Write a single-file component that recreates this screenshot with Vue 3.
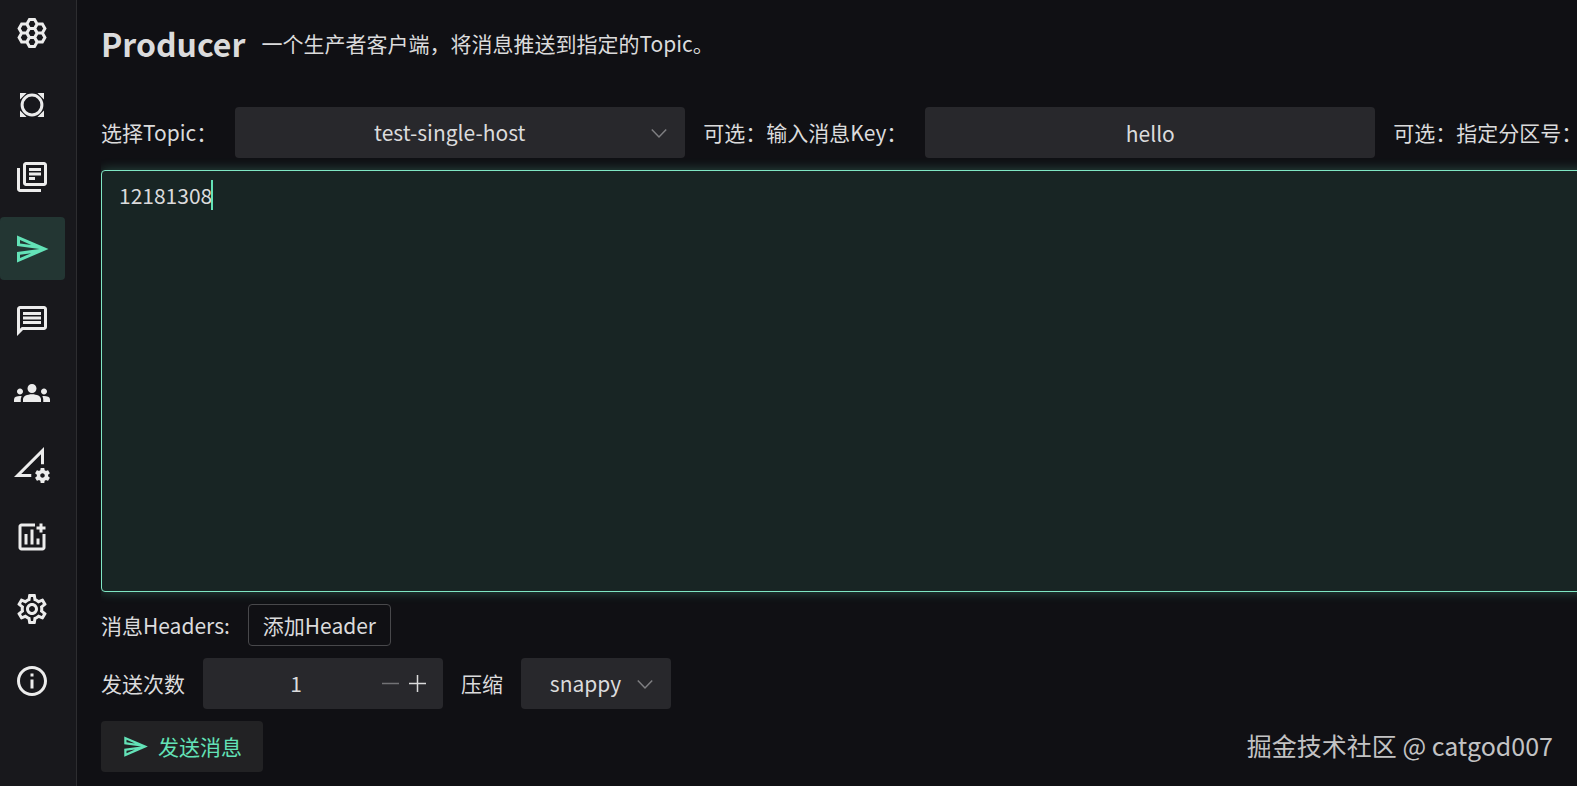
<template>
  <div class="layout">
    <nav class="sidebar" aria-label="Kafka">
      <a
        v-for="item in menu"
        :key="item.name"
        href="#"
        class="menu-item"
        :class="{ active: item.name === current }"
        :aria-label="item.name"
        @click.prevent="current = item.name"
      >
        <svg viewBox="0 0 24 24" aria-hidden="true">
          <path v-if="item.line" :d="item.line" class="line" />
          <path v-if="item.fill" :d="item.fill" />
        </svg>
      </a>
    </nav>

    <main class="content">
      <header class="header">
        <h2>Producer</h2>
        <p>一个生产者客户端，将消息推送到指定的Topic。</p>
      </header>

      <form class="form" @submit.prevent>
        <div class="row">
          <label for="topic">选择Topic：</label>
          <div class="select wide">
            <select id="topic" v-model="topic">
              <option>test-single-host</option>
            </select>
            <svg viewBox="0 0 16 16" aria-hidden="true"><path :d="chevron" /></svg>
          </div>
          <label for="key">可选：输入消息Key：</label>
          <input id="key" v-model="key" class="input wide" type="text" />
          <label for="partition">可选：指定分区号：</label>
          <input id="partition" v-model="partition" class="input wide" type="text" />
        </div>

        <div class="editor">
          <textarea v-model="message" aria-label="消息" spellcheck="false"></textarea>
          <span class="caret"></span>
        </div>

        <div class="row">
          <span>消息Headers:</span>
          <button type="button" class="btn-outline">添加Header</button>
        </div>

        <div class="row">
          <label for="times">发送次数</label>
          <div class="number">
            <input id="times" v-model.number="times" type="text" inputmode="numeric" />
            <button type="button" aria-label="-" :disabled="times <= 1" @click="times--">
              <svg viewBox="0 0 27 27" aria-hidden="true"><path d="M5 13.5h17" /></svg>
            </button>
            <button type="button" aria-label="+" @click="times++">
              <svg viewBox="0 0 27 27" aria-hidden="true"><path d="M5 13.5h17M13.5 5v17" /></svg>
            </button>
          </div>
          <label for="compression">压缩</label>
          <div class="select narrow">
            <select id="compression" v-model="compression">
              <option>snappy</option>
            </select>
            <svg viewBox="0 0 16 16" aria-hidden="true"><path :d="chevron" /></svg>
          </div>
        </div>

        <div class="row">
          <button type="submit" class="btn-send">
            <svg viewBox="0 0 24 24" aria-hidden="true"><path :d="sendIcon" /></svg>
            发送消息
          </button>
        </div>
      </form>
    </main>

    <div class="watermark">掘金技术社区 @ catgod007</div>
  </div>
</template>

<script setup>
import { ref } from 'vue'

const sendIcon =
  'M4.01 6.03l7.51 3.22-7.52-1 .01-2.22m7.5 8.72L4 17.97v-2.22l7.51-1M2.01 3L2 10l15 2-15 2 .01 7L23 12 2.01 3z'
const chevron = 'M3.2 5.6L8 10.6l4.8-5'

// seven flat-topped cells around a centre one
const hexCell = (cx, cy) =>
  `M${cx - 3.4} ${cy}l1.7-3h3.4l1.7 3l-1.7 3h-3.4z`
const honeycomb = [
  [12, 12],
  [12, 6],
  [12, 18],
  [6.8, 9],
  [6.8, 15],
  [17.2, 9],
  [17.2, 15],
]
  .map(([x, y]) => hexCell(x, y))
  .join('')

const menu = [
  { name: 'Cluster', line: honeycomb },
  {
    name: 'Node',
    line: 'M12 5.4a6.6 6.6 0 1 0 0 13.2a6.6 6.6 0 1 0 0-13.2z',
    fill: 'M4 4h4.4L4 8.4zM20 4v4.4l-4.4-4.4zM4 20v-4.4l4.4 4.4zM20 20h-4.4l4.4-4.4z',
  },
  {
    name: 'Topic',
    fill: 'M4 6H2v14c0 1.1.9 2 2 2h14v-2H4V6zm16-4H8c-1.1 0-2 .9-2 2v12c0 1.1.9 2 2 2h12c1.1 0 2-.9 2-2V4c0-1.1-.9-2-2-2zm0 14H8V4h12v12zM10 9h8v2h-8zm0 3h4v2h-4zm0-6h8v2h-8z',
  },
  { name: 'Producer', fill: sendIcon },
  {
    name: 'Consumer',
    fill: 'M4 4h16v12H5.17L4 17.17V4m0-2c-1.1 0-1.99.9-1.99 2L2 22l4-4h14c1.1 0 2-.9 2-2V4c0-1.1-.9-2-2-2H4zm2 10h12v2H6v-2zm0-3h12v2H6V9zm0-3h12v2H6V6z',
  },
  {
    name: 'Group',
    fill: 'M12 12.75c1.63 0 3.07.39 4.24.9 1.08.48 1.76 1.56 1.76 2.73V18H6v-1.61c0-1.18.68-2.26 1.76-2.73 1.17-.52 2.61-.91 4.24-.91zM4 13c1.1 0 2-.9 2-2s-.9-2-2-2-2 .9-2 2 .9 2 2 2zm1.13 1.1c-.37-.06-.74-.1-1.13-.1-.99 0-1.93.21-2.78.58A2.01 2.01 0 0 0 0 16.43V18h4.5v-1.61c0-.83.23-1.61.63-2.29zM20 13c1.1 0 2-.9 2-2s-.9-2-2-2-2 .9-2 2 .9 2 2 2zm4 3.43c0-.81-.48-1.53-1.22-1.85A6.95 6.95 0 0 0 20 14c-.39 0-.76.04-1.13.1.4.68.63 1.46.63 2.29V18H24v-1.57zM12 6c1.66 0 3 1.34 3 3s-1.34 3-3 3-3-1.34-3-3 1.34-3 3-3z',
  },
  {
    name: 'Monitor',
    fill: 'M18.99 11.5c.34 0 .67.03 1 .07L20 0 0 20h11.56c-.04-.33-.07-.66-.07-1 0-.34.03-.67.07-1H4.83L18 4.83v6.74c.33-.04.66-.07.99-.07zm3.71 7.99c.02-.16.04-.32.04-.49 0-.17-.01-.33-.04-.49l1.06-.83c.09-.08.12-.21.06-.32l-1-1.73c-.06-.11-.19-.15-.31-.11l-1.24.5c-.26-.2-.54-.37-.85-.49l-.19-1.32c-.01-.12-.12-.21-.24-.21h-2c-.12 0-.23.09-.25.21l-.19 1.32c-.3.13-.59.29-.85.49l-1.24-.5c-.11-.04-.24 0-.31.11l-1 1.73c-.06.11-.04.24.06.32l1.06.83c-.02.16-.03.32-.03.49 0 .17.01.33.03.49l-1.06.83c-.09.08-.12.21-.06.32l1 1.73c.06.11.19.15.31.11l1.24-.5c.26.2.54.37.85.49l.19 1.32c.02.12.12.21.25.21h2c.12 0 .23-.09.24-.21l.19-1.32c.3-.13.59-.29.84-.49l1.25.5c.11.04.24 0 .31-.11l1-1.73c.06-.11.03-.24-.06-.32l-1.05-.83zm-3.71 1.01c-.83 0-1.5-.67-1.5-1.5s.67-1.5 1.5-1.5 1.5.67 1.5 1.5-.67 1.5-1.5 1.5z',
  },
  {
    name: 'Chart',
    fill: 'M19 10v9H5V5h9V3H5c-1.1 0-2 .9-2 2v14c0 1.1.9 2 2 2h14c1.1 0 2-.9 2-2v-9h-2zM7 10h2v7H7zM11 7h2v10h-2zM15 13h2v4h-2zM17 3h2v2h2v2h-2v2h-2V7h-2V5h2z',
  },
  {
    name: 'Settings',
    fill: 'M19.43 12.98c.04-.32.07-.64.07-.98 0-.34-.03-.66-.07-.98l2.11-1.65c.19-.15.24-.42.12-.64l-2-3.46a.5.5 0 0 0-.61-.22l-2.49 1c-.52-.4-1.08-.73-1.69-.98l-.38-2.65A.488.488 0 0 0 14 2h-4c-.25 0-.46.18-.49.42l-.38 2.65c-.61.25-1.17.59-1.69.98l-2.49-1a.566.566 0 0 0-.18-.03c-.17 0-.34.09-.43.25l-2 3.46c-.13.22-.07.49.12.64l2.11 1.65c-.04.32-.07.65-.07.98 0 .33.03.66.07.98l-2.11 1.65c-.19.15-.24.42-.12.64l2 3.46a.5.5 0 0 0 .61.22l2.49-1c.52.4 1.08.73 1.69.98l.38 2.65c.03.24.24.42.49.42h4c.25 0 .46-.18.49-.42l.38-2.65c.61-.25 1.17-.59 1.69-.98l2.49 1c.06.02.12.03.18.03.17 0 .34-.09.43-.25l2-3.46c.12-.22.07-.49-.12-.64l-2.11-1.65zm-1.98-1.71c.04.31.05.52.05.73 0 .21-.02.43-.05.73l-.14 1.13.89.7 1.08.84-.7 1.21-1.27-.51-1.04-.42-.9.68c-.43.32-.84.56-1.25.73l-1.06.43-.16 1.13-.2 1.35h-1.4l-.19-1.35-.16-1.13-1.06-.43c-.43-.18-.83-.41-1.23-.71l-.91-.7-1.06.43-1.27.51-.7-1.21 1.08-.84.89-.7-.14-1.13c-.03-.31-.05-.54-.05-.74s.02-.43.05-.73l.14-1.13-.89-.7-1.08-.84.7-1.21 1.27.51 1.04.42.9-.68c.43-.32.84-.56 1.25-.73l1.06-.43.16-1.13.2-1.35h1.39l.19 1.35.16 1.13 1.06.43c.43.18.83.41 1.23.71l.91.7 1.06-.43 1.27-.51.7 1.21-1.07.85-.89.7.14 1.13zM12 8c-2.21 0-4 1.79-4 4s1.79 4 4 4 4-1.79 4-4-1.79-4-4-4zm0 6c-1.1 0-2-.9-2-2s.9-2 2-2 2 .9 2 2-.9 2-2 2z',
  },
  {
    name: 'About',
    fill: 'M11 7h2v2h-2zm0 4h2v6h-2zm1-9C6.48 2 2 6.48 2 12s4.48 10 10 10 10-4.48 10-10S17.52 2 12 2zm0 18c-4.41 0-8-3.59-8-8s3.59-8 8-8 8 3.59 8 8-3.59 8-8 8z',
  },
]

const current = ref('Producer')
const topic = ref('test-single-host')
const key = ref('hello')
const partition = ref('')
const message = ref('12181308')
const times = ref(1)
const compression = ref('snappy')
</script>

<style>
body {
  background: #101014;
}
</style>

<style scoped>
.layout {
  display: flex;
  min-height: 100vh;
  overflow: hidden;
  position: relative;
  background: #101014;
  color: #dbdbdc;
  font-family: 'Noto Sans CJK SC', 'Noto Sans', sans-serif;
  font-size: 21px;
  line-height: 33px;
}

.layout * {
  box-sizing: border-box;
}

.sidebar {
  flex: none;
  display: flex;
  flex-direction: column;
  gap: 9px;
  padding: 1px 11px 0 0;
  background: #18181c;
  border-right: 1px solid #2d2d30;
}

.menu-item {
  display: flex;
  align-items: center;
  width: 65px;
  height: 63px;
  padding-left: 14px;
  border-radius: 4px;
  color: #ececec;
}

.menu-item svg {
  width: 36px;
  height: 36px;
  fill: currentColor;
}

.menu-item .line {
  fill: none;
  stroke: currentColor;
  stroke-width: 2;
}

.menu-item.active {
  background: #233633;
  color: #63e2b7;
}

.content {
  flex: 1;
  min-width: 0;
  padding: 18px 0 12px 24px;
}

.header {
  display: flex;
  align-items: center;
  gap: 16px;
  height: 50px;
  margin-bottom: 39px;
}

.header h2 {
  margin: 0;
  font-size: 32px;
}

.header p {
  margin: 0;
}

.form {
  display: flex;
  flex-direction: column;
  gap: 12px;
  width: max-content;
  min-width: 100%;
}

.row {
  display: flex;
  align-items: center;
  gap: 18px;
  white-space: nowrap;
}

input,
select,
textarea,
button {
  margin: 0;
  border: none;
  outline: none;
  color: inherit;
  font: inherit;
}

button {
  cursor: pointer;
}

.wide {
  width: 450px;
}

.narrow {
  width: 150px;
}

.input,
.select select {
  height: 51px;
  padding: 0 18px;
  border-radius: 4px;
  background: #28282c;
  text-align: center;
}

.select {
  position: relative;
}

.select select {
  display: block;
  width: 100%;
  padding-right: 39px;
  appearance: none;
  text-align-last: center;
}

.select svg {
  position: absolute;
  top: 14px;
  right: 14px;
  width: 24px;
  height: 24px;
  fill: none;
  stroke: #7f7f82;
  pointer-events: none;
}

/* the focus glow only shows above and below the box */
.editor {
  position: relative;
  clip-path: inset(-12px 0);
}

.editor textarea {
  display: block;
  width: 100%;
  height: 422px;
  padding: 8px 17px;
  border: 1px solid #7fe7c4;
  border-radius: 4px;
  background: #182524;
  box-shadow: 0 0 12px rgba(99, 226, 183, 0.3);
  caret-color: transparent;
  resize: none;
}

.caret {
  position: absolute;
  top: 10px;
  left: 110px;
  width: 2px;
  height: 30px;
  background: #63e2b7;
}

.btn-outline {
  height: 42px;
  padding: 0 14px;
  border: 1px solid #48484b;
  border-radius: 4px;
  background: transparent;
}

.number {
  display: flex;
  align-items: center;
  width: 240px;
  height: 51px;
  padding: 0 12px;
  border-radius: 4px;
  background: #28282c;
}

.number input {
  flex: 1;
  min-width: 0;
  padding: 0;
  background: transparent;
  text-align: center;
}

.number button {
  width: 27px;
  height: 27px;
  padding: 0;
  background: transparent;
}

.number button:disabled {
  color: #727275;
}

.number svg {
  display: block;
  fill: none;
  stroke: currentColor;
  stroke-width: 1.5;
}

.btn-send {
  display: flex;
  align-items: center;
  gap: 9px;
  height: 51px;
  padding: 0 21px;
  border-radius: 4px;
  background: #222224;
  color: #63e2b7;
}

.btn-send svg {
  width: 27px;
  height: 27px;
  fill: currentColor;
}

.watermark {
  position: absolute;
  right: 24px;
  bottom: 24px;
  color: #c3c3c4;
  font-size: 25px;
}
</style>
